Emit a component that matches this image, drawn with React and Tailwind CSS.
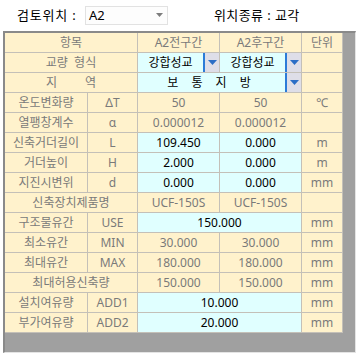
import React from "react";

const GRAY = "text-[#7a7a7a]";

function Cell({ span = 1, kind = "ro", children, className = "" }) {
  const spanCls = span === 2 ? "col-span-2" : "";
  const bg = kind === "ed" ? "bg-[#e0ffff] text-black" : `bg-[#fff2cc] ${GRAY}`;
  return (
    <div className={`${spanCls} ${bg} flex items-center justify-center whitespace-pre leading-none ${className}`}>
      {children}
    </div>
  );
}

function Combo({ span = 1, children, textClass = "" }) {
  const spanCls = span === 2 ? "col-span-2" : "";
  return (
    <div className={`${spanCls} bg-[#e0ffff] text-black flex items-stretch leading-none`}>
      <div className={`flex-1 flex items-center justify-center whitespace-pre ${textClass}`}>{children}</div>
      <div className="w-[16px] border-l-2 border-[#2b7bd8] bg-[#dedee8] flex items-center justify-center">
        <svg width="9" height="5" viewBox="0 0 9 5">
          <polygon points="0,0 9,0 4.5,5" fill="#2c6ec6" />
        </svg>
      </div>
    </div>
  );
}

export default function App() {
  return (
    <div
      className="w-[359px] h-[353px] bg-white text-[12px]"
      style={{ fontFamily: '"Noto Sans", "Noto Sans CJK KR", sans-serif' }}
    >
      <div className="h-[31px] flex items-center text-[13px] text-black">
        <span className="ml-[17px] w-[60px] tracking-[0.8px]">검토위치 :</span>
        <div className="ml-[8px] w-[83px] h-[19px] border border-[#e2e2e2] bg-[#fdfdfd] flex items-center justify-between pl-[3px] pr-[4px] mt-[-1px]">
          <span className="leading-none">A2</span>
          <svg width="7" height="4" viewBox="0 0 7 4">
            <polygon points="0,0 7,0 3.5,4" fill="#7d7d7d" />
          </svg>
        </div>
        <span className="ml-[46px] tracking-[0.4px]">위치종류 : 교각</span>
      </div>
      <div className="ml-[3px] w-[353px] h-[322px] bg-[#a0a0a0] border-l-2 border-t-2 border-[#8a8a8a] border-r border-b border-r-[#e4e4e4] border-b-[#e4e4e4]">
        <div className="grid grid-cols-[82px_49px_81px_81px_40px] auto-rows-[19px] gap-px bg-[#c4c0b8] w-fit border-r border-b border-[#c4c0b8]">
          <Cell span={2}>항목</Cell>
          <Cell>A2전구간</Cell>
          <Cell>A2후구간</Cell>
          <Cell>단위</Cell>

          <Cell span={2}>{"교량  형식"}</Cell>
          <Combo>강합성교</Combo>
          <Combo>강합성교</Combo>
          <Cell />

          <Cell span={2}>{"지         역"}</Cell>
          <Combo span={2} textClass="tracking-[5px]">{"보 통 지 방"}</Combo>
          <Cell />

          <Cell>온도변화량</Cell>
          <Cell>ΔT</Cell>
          <Cell>50</Cell>
          <Cell>50</Cell>
          <Cell>℃</Cell>

          <Cell>열팽창계수</Cell>
          <Cell>α</Cell>
          <Cell>0.000012</Cell>
          <Cell>0.000012</Cell>
          <Cell />

          <Cell>신축거더길이</Cell>
          <Cell>L</Cell>
          <Cell kind="ed">109.450</Cell>
          <Cell kind="ed">0.000</Cell>
          <Cell>m</Cell>

          <Cell>거더높이</Cell>
          <Cell>H</Cell>
          <Cell kind="ed">2.000</Cell>
          <Cell kind="ed">0.000</Cell>
          <Cell>m</Cell>

          <Cell>지진시변위</Cell>
          <Cell>d</Cell>
          <Cell kind="ed">0.000</Cell>
          <Cell kind="ed">0.000</Cell>
          <Cell>mm</Cell>

          <Cell span={2}>신축장치제품명</Cell>
          <Cell>UCF-150S</Cell>
          <Cell>UCF-150S</Cell>
          <Cell />

          <Cell>구조물유간</Cell>
          <Cell>USE</Cell>
          <Cell span={2} kind="ed">150.000</Cell>
          <Cell>mm</Cell>

          <Cell>최소유간</Cell>
          <Cell>MIN</Cell>
          <Cell>30.000</Cell>
          <Cell>30.000</Cell>
          <Cell>mm</Cell>

          <Cell>최대유간</Cell>
          <Cell>MAX</Cell>
          <Cell>180.000</Cell>
          <Cell>180.000</Cell>
          <Cell>mm</Cell>

          <Cell span={2}>최대허용신축량</Cell>
          <Cell>150.000</Cell>
          <Cell>150.000</Cell>
          <Cell>mm</Cell>

          <Cell>설치여유량</Cell>
          <Cell>ADD1</Cell>
          <Cell span={2} kind="ed">10.000</Cell>
          <Cell>mm</Cell>

          <Cell>부가여유량</Cell>
          <Cell>ADD2</Cell>
          <Cell span={2} kind="ed">20.000</Cell>
          <Cell>mm</Cell>
        </div>
      </div>
    </div>
  );
}
